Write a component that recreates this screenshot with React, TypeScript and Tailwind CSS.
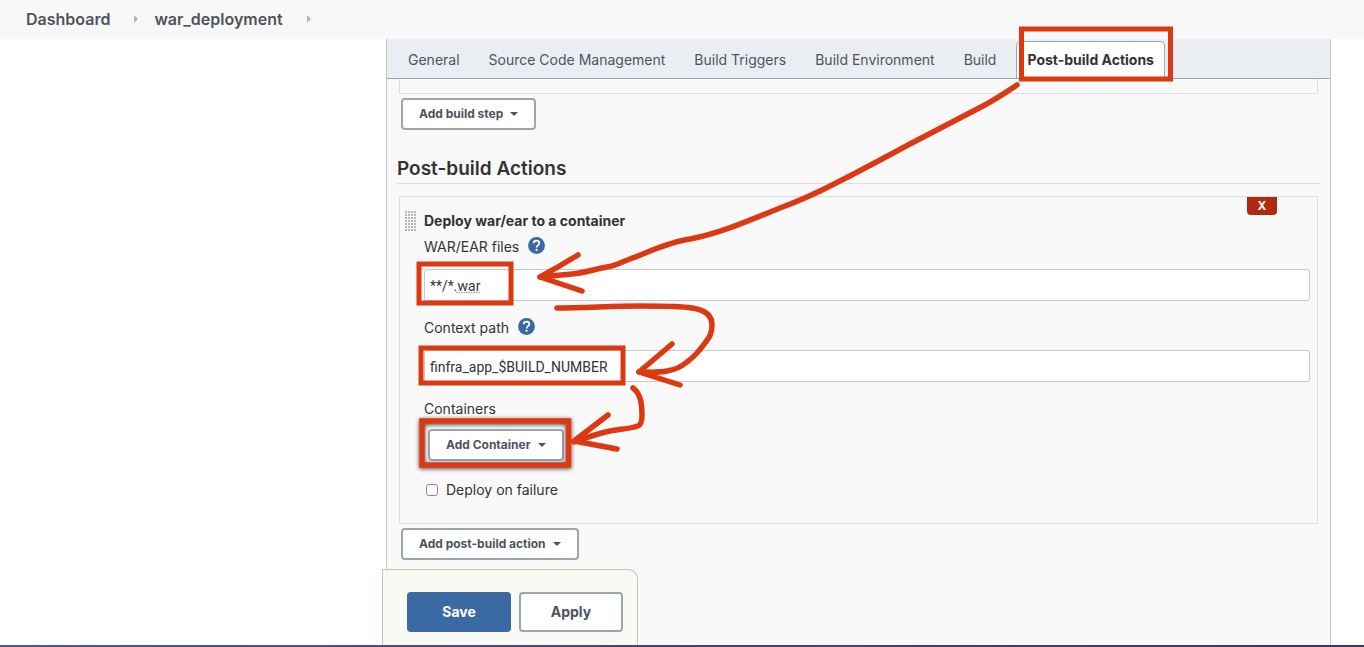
import type { ReactNode } from "react";

const tabs = ["General", "Source Code Management", "Build Triggers", "Build Environment", "Build"];

function Crumb({ children }: { children: ReactNode }) {
  return (
    <li className="flex items-center">
      <a href="#" className="text-[16px] leading-5 font-semibold text-[#4d545d]">{children}</a>
      <svg className="mr-4 ml-6" width="4" height="8" viewBox="0 0 4 8" aria-hidden="true">
        <path d="M0 0L4 4L0 8Z" fill="#b4b4b4" />
      </svg>
    </li>
  );
}

function MenuButton({ children }: { children: ReactNode }) {
  return (
    <button
      type="button"
      className="flex h-8 items-center gap-[7px] rounded-[4px] border-2 border-[#9ba6af] bg-white px-4 pb-px text-[12px] leading-4 font-bold text-[#4d545d]"
    >
      {children}
      <svg width="8" height="4" viewBox="0 0 8 4" aria-hidden="true">
        <path d="M0 0H8L4 4Z" fill="currentColor" />
      </svg>
    </button>
  );
}

function HelpLink() {
  return (
    <a href="#" aria-label="Help">
      <svg width="17" height="17" viewBox="0 0 17 17" aria-hidden="true">
        <circle cx="8.5" cy="8.5" r="8.4" fill="#3b69a3" />
        <path
          d="M5.700 6.300C5.700 4.600 7 3.700 8.500 3.700S11.300 4.700 11.300 6.200C11.300 8.100 8.600 8.200 8.600 10.400"
          fill="none"
          stroke="#fff"
          strokeWidth="1.7"
        />
        <circle cx="8.6" cy="12.8" r="1.150" fill="#fff" />
      </svg>
    </a>
  );
}

function TextField({ id, label, value }: { id: string; label: string; value: string }) {
  return (
    <div>
      <div className="flex h-5 items-start gap-[9px]">
        <label htmlFor={id}>{label}</label>
        <HelpLink />
      </div>
      <input
        id={id}
        type="text"
        defaultValue={value}
        spellCheck={false}
        className="mt-3 block h-8 w-full rounded-[3px] border border-[#c8c8c8] bg-white px-[5px] pt-[2px] font-['Roboto',sans-serif] text-[14px] text-[#333] outline-none"
      />
    </div>
  );
}

function Grip() {
  return (
    <svg width="11" height="20" viewBox="0 0 11 20" className="shrink-0" aria-hidden="true">
      <defs>
        <pattern id="grip" width="3" height="3" patternUnits="userSpaceOnUse">
          <rect width="2" height="2" fill="#b9b9b3" />
        </pattern>
      </defs>
      <rect width="11" height="20" fill="url(#grip)" />
    </svg>
  );
}

function Markup() {
  return (
    <svg
      className="pointer-events-none absolute top-0 left-0"
      width="1364"
      height="645"
      viewBox="0 0 1364 645"
      fill="none"
      stroke="#dc3912"
      strokeWidth="5"
      aria-hidden="true"
    >
      <defs>
        <filter id="shade" x="-10%" y="-20%" width="120%" height="140%">
          <feDropShadow dx="0" dy="1" stdDeviation="2" floodColor="#000" floodOpacity="0.75" />
        </filter>
      </defs>
      <path d="M456 292.500H480" stroke="#e0806c" strokeWidth="1" strokeDasharray="1.500 1" />
      <rect x="1021.500" y="29" width="149" height="50" />
      <rect x="419" y="264" width="92" height="39" />
      <rect x="421" y="348" width="202" height="35" />
      <rect x="422" y="421" width="146.500" height="44" strokeWidth="5.500" filter="url(#shade)" />
      <g strokeLinecap="round" strokeLinejoin="round" strokeWidth="5.500">
        <path d="M1017 85C1005 93 994 100 983 106C958 119 933 132 908 145C884 158 860 171 836 183C817 193 799 201 780 208C748 221 718 234 690 239C668 242 649 252 630 259C622 262 615 266 607 267C596 269 584 273 572 274L540 277" />
        <path d="M578 255C565 263 553 270 540 277L582 291" />
        <path d="M557 308C585 308 612 306 640 306C660 306 680 306 692 308C706 310 712 316 712 325C712 334 709 338 705 343C700 350 694 357 687 362C681 367 674 370 667 371C657 373 648 372 639 372" />
        <path d="M672 344L639 372L680 385" />
        <path d="M633 388C637 391 640 397 641 402C642 408 642 411 642 415C642 420 641 425 638 426C629 429 619 429 610 431C596 434 585 438 574 442" />
        <path d="M608 415L574 441L617 449" />
      </g>
    </svg>
  );
}

export default function App() {
  return (
    <div className="relative flex min-h-screen flex-col bg-white font-['Inter',sans-serif] text-[14px] leading-5 text-[#333]">
      <header className="h-[39px] bg-[#f8f8f8]">
        <nav aria-label="Breadcrumb">
          <ul className="flex h-[38px] items-center pl-[26px]">
            <Crumb>Dashboard</Crumb>
            <Crumb>war_deployment</Crumb>
          </ul>
        </nav>
      </header>

      <div className="flex flex-1">
        <aside className="w-[386px] shrink-0" />
        <main className="mr-[33px] flex min-w-0 flex-1 flex-col border-x border-[#c5c8cb] bg-[#f9f9f9]">
          <nav
            aria-label="Configuration sections"
            className="flex h-10 items-end border-b border-[#9ba6af] bg-[#eaeef2] pl-[6px] whitespace-nowrap"
          >
            {tabs.map((tab) => (
              <a key={tab} href="#" className="flex h-[37px] items-center pr-[14px] pl-[15px] text-[#4d545d]">
                {tab}
              </a>
            ))}
            <a
              href="#"
              aria-current="page"
              className="ml-[6px] flex h-[37px] items-center rounded-t-[5px] border border-b-0 border-[#9ba6af] bg-white px-[10px] font-bold"
            >
              Post-build Actions
            </a>
          </nav>

          <form className="flex flex-1 flex-col px-3">
            <div className="h-[15px] border border-t-0 border-[#dedede]" />
            <div className="mt-1 ml-[2px] flex">
              <MenuButton>Add build step</MenuButton>
            </div>

            <h2 className="-mx-[2px] mt-[27px] border-b border-[#dedede] pb-[2px] text-[19px] leading-6 font-semibold">
              Post-build Actions
            </h2>

            <section className="relative mt-3 border border-[#dedede] pt-[14px] pr-[7px] pb-[23px] pl-6">
              <button
                type="button"
                className="absolute top-0 right-10 h-[18px] w-[30px] rounded-b-[4px] bg-[#b02a10] text-[12px] leading-4 font-bold text-white"
              >
                X
              </button>
              <div className="-ml-[19px] flex items-center gap-2">
                <Grip />
                <h3 className="font-bold">Deploy war/ear to a container</h3>
              </div>
              <div className="mt-[6px] flex flex-col gap-[17px]">
                <TextField id="war" label="WAR/EAR files" value="**/*.war" />
                <TextField id="context" label="Context path" value="finfra_app_$BUILD_NUMBER" />
                <div>
                  <div>Containers</div>
                  <div className="mt-[10px] ml-1 flex">
                    <MenuButton>Add Container</MenuButton>
                  </div>
                </div>
              </div>
              <div className="mt-[19px] ml-[2px] flex items-center gap-2">
                <input
                  id="failure"
                  type="checkbox"
                  className="size-3 appearance-none rounded-[3px] border border-[#8a8a8a] bg-white checked:bg-[#3b69a3]"
                />
                <label htmlFor="failure">Deploy on failure</label>
              </div>
            </section>

            <div className="mt-1 ml-[2px] flex">
              <MenuButton>Add post-build action</MenuButton>
            </div>

            <div className="sticky bottom-0 mt-[9px] -ml-[17px] flex flex-1 items-start gap-2 self-start rounded-tr-[10px] border border-b-0 border-[#b4c9b6] bg-[#f8f9f2]/90 px-[14px] pt-[22px] pb-[13px] pl-6 font-bold">
              <button type="button" className="h-10 w-[104px] rounded-[4px] bg-[#3b69a3] text-white">
                Save
              </button>
              <button
                type="button"
                className="h-10 w-[104px] rounded-[4px] border-2 border-[#9ba6af] bg-white text-[#4d545d]"
              >
                Apply
              </button>
            </div>
          </form>
        </main>
      </div>
      <div className="h-[2px] bg-linear-to-r from-[#54548f] to-[#40306b]" />
      <Markup />
    </div>
  );
}
